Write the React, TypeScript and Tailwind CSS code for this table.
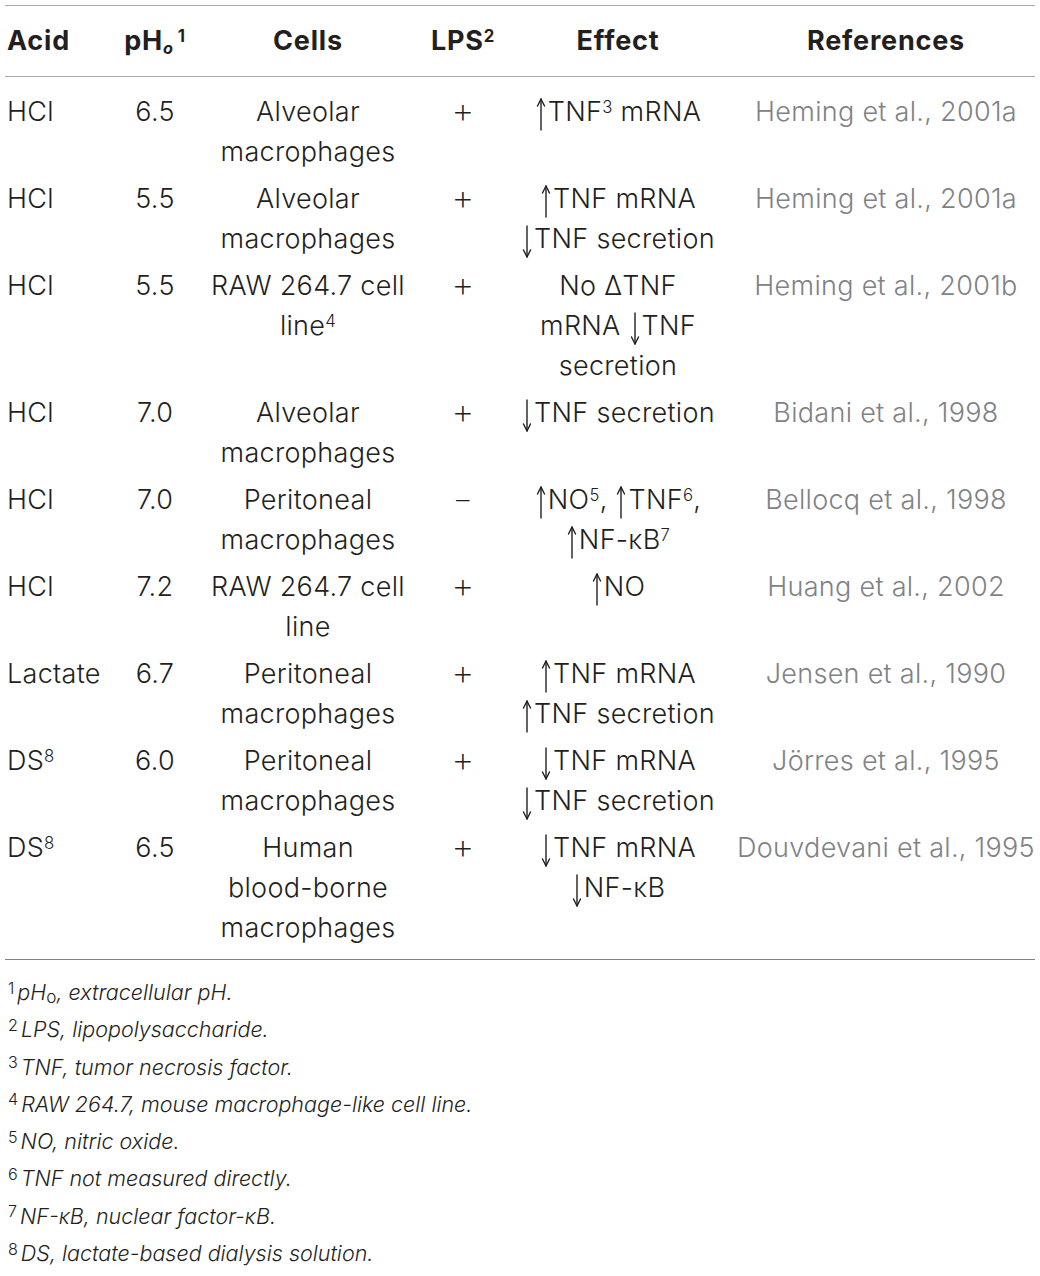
import React from "react";

const Sup = ({ children }: { children: React.ReactNode }) => (
  <span className="align-[0.5em] text-[0.62em] leading-none">{children}</span>
);

const Arrow = ({ down }: { down?: boolean }) => (
  <svg
    width="12"
    height="33"
    viewBox="0 0 12 33"
    className={`inline-block mr-[1px] ${down ? "align-[-10px]" : "align-[-10px]"}`}
    fill="none"
    stroke="#231f20"
    strokeWidth="1.4"
    strokeLinecap="round"
    strokeLinejoin="round"
  >
    {down ? (
      <>
        <path d="M6 1 V32" />
        <path d="M2.5 25 L6 32 L9.5 25" />
      </>
    ) : (
      <>
        <path d="M6 1 V32" />
        <path d="M2.5 8 L6 1 L9.5 8" />
      </>
    )}
  </svg>
);
const Up = () => <Arrow />;
const Down = () => <Arrow down />;

type Row = {
  acid: React.ReactNode;
  ph: string;
  cells: React.ReactNode[];
  lps: string;
  effect: React.ReactNode[];
  ref: string;
};

const rows: Row[] = [
  {
    acid: "HCl",
    ph: "6.5",
    cells: ["Alveolar", "macrophages"],
    lps: "+",
    effect: [<><Up />TNF<Sup>3</Sup> mRNA</>],
    ref: "Heming et al., 2001a",
  },
  {
    acid: "HCl",
    ph: "5.5",
    cells: ["Alveolar", "macrophages"],
    lps: "+",
    effect: [<><Up />TNF mRNA</>, <><Down />TNF secretion</>],
    ref: "Heming et al., 2001a",
  },
  {
    acid: "HCl",
    ph: "5.5",
    cells: ["RAW 264.7 cell", <>line<Sup>4</Sup></>],
    lps: "+",
    effect: ["No ΔTNF", <>mRNA <Down />TNF</>, "secretion"],
    ref: "Heming et al., 2001b",
  },
  {
    acid: "HCl",
    ph: "7.0",
    cells: ["Alveolar", "macrophages"],
    lps: "+",
    effect: [<><Down />TNF secretion</>],
    ref: "Bidani et al., 1998",
  },
  {
    acid: "HCl",
    ph: "7.0",
    cells: ["Peritoneal", "macrophages"],
    lps: "–",
    effect: [
      <><Up />NO<Sup>5</Sup>, <Up />TNF<Sup>6</Sup>,</>,
      <><Up />NF-κB<Sup>7</Sup></>,
    ],
    ref: "Bellocq et al., 1998",
  },
  {
    acid: "HCl",
    ph: "7.2",
    cells: ["RAW 264.7 cell", "line"],
    lps: "+",
    effect: [<><Up />NO</>],
    ref: "Huang et al., 2002",
  },
  {
    acid: "Lactate",
    ph: "6.7",
    cells: ["Peritoneal", "macrophages"],
    lps: "+",
    effect: [<><Up />TNF mRNA</>, <><Up />TNF secretion</>],
    ref: "Jensen et al., 1990",
  },
  {
    acid: <>DS<Sup>8</Sup></>,
    ph: "6.0",
    cells: ["Peritoneal", "macrophages"],
    lps: "+",
    effect: [<><Down />TNF mRNA</>, <><Down />TNF secretion</>],
    ref: "Jörres et al., 1995",
  },
  {
    acid: <>DS<Sup>8</Sup></>,
    ph: "6.5",
    cells: ["Human", "blood-borne", "macrophages"],
    lps: "+",
    effect: [<><Down />TNF mRNA</>, <><Down />NF-κB</>],
    ref: "Douvdevani et al., 1995",
  },
];

const Lines = ({ items }: { items: React.ReactNode[] }) => (
  <>
    {items.map((it, i) => (
      <div key={i} className="whitespace-nowrap">
        {it}
      </div>
    ))}
  </>
);

const grid = "grid grid-cols-[105px_90px_216px_94px_216px_1fr]";

const footnotes: React.ReactNode[] = [
  <>pH<span className="not-italic text-[0.8em] leading-none align-[-0.2em]">o</span>, extracellular pH.</>,
  <>LPS, lipopolysaccharide.</>,
  <>TNF, tumor necrosis factor.</>,
  <>RAW 264.7, mouse macrophage-like cell line.</>,
  <>NO, nitric oxide.</>,
  <>TNF not measured directly.</>,
  <>NF-κB, nuclear factor-κB.</>,
  <>DS, lactate-based dialysis solution.</>,
];

export default function App() {
  return (
    <div className="w-[1040px] h-[1276px] bg-white text-[#231f20] font-['Inter','Liberation_Sans',sans-serif] overflow-hidden">
      <div className="pt-[5px] pl-[5px] w-[1035px]">
        {/* header */}
        <div className={`${grid} border-t border-b border-[#a7a9ac] py-[15px] text-[27px] leading-[40px] font-bold tracking-[0.8px]`}>
          <div className="pl-[2px]">Acid</div>
          <div className="text-center whitespace-nowrap">
            pH<span className="italic text-[0.6em] leading-none align-[-0.25em]">o</span>
            <span className="align-[0.5em] text-[0.62em] leading-none ml-[4px]">1</span>
          </div>
          <div className="text-center">Cells</div>
          <div className="text-center whitespace-nowrap">
            LPS<Sup>2</Sup>
          </div>
          <div className="text-center">Effect</div>
          <div className="text-center pl-[11px]">References</div>
        </div>
        {/* body */}
        <div className="pt-[12px] pb-[7px] border-b border-[#808285] text-[27px] leading-[40px] font-light tracking-[0.3px]">
          {rows.map((r, i) => (
            <div key={i} className={`${grid} pt-[3px] pb-[4px]`}>
              <div className="pl-[2px] whitespace-nowrap">{r.acid}</div>
              <div className="text-center">{r.ph}</div>
              <div className="text-center">
                <Lines items={r.cells} />
              </div>
              <div className="text-center">
                {r.lps === "+" ? (
                  <span className="font-extralight text-[36px] leading-none">+</span>
                ) : (
                  <span className="font-extralight text-[27px] leading-none">–</span>
                )}
              </div>
              <div className="text-center">
                <Lines items={r.effect} />
              </div>
              <div className="text-center pl-[11px] text-[#808285] whitespace-nowrap">{r.ref}</div>
            </div>
          ))}
        </div>
        {/* footnotes */}
        <div className="pt-[14px] pl-[3px] text-[21.5px] leading-[37.3px] font-light">
          {footnotes.map((f, i) => (
            <div key={i} className="whitespace-nowrap">
              <span className="align-[0.4em] text-[0.75em] leading-none mr-[3px]">{i + 1}</span>
              <span className="italic">{f}</span>
            </div>
          ))}
        </div>
      </div>
    </div>
  );
}
